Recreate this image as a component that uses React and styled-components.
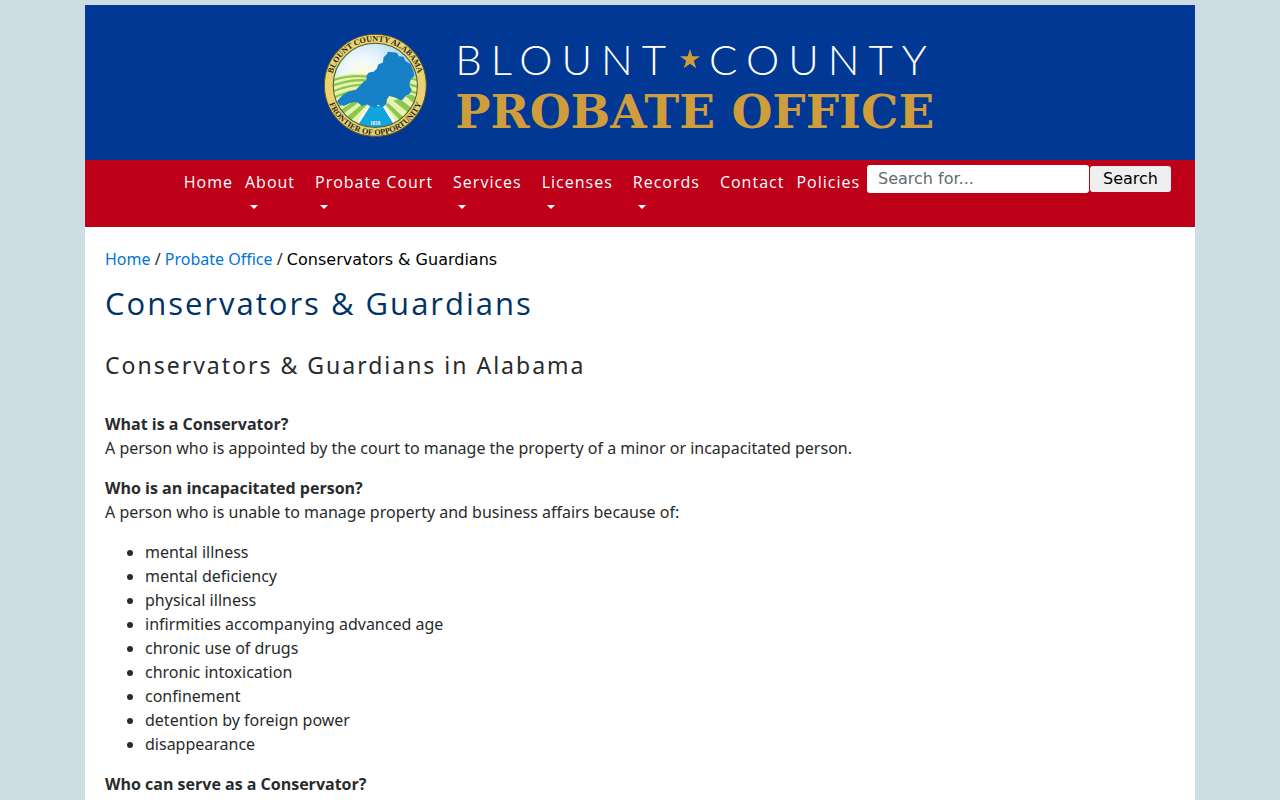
import React from 'react';
import styled, {createGlobalStyle} from 'styled-components';

const navLinks = [
    {label: 'Home'},
    {label: 'About', menu: true},
    {label: 'Probate Court', menu: true},
    {label: 'Services', menu: true},
    {label: 'Licenses', menu: true},
    {label: 'Records', menu: true},
    {label: 'Contact'},
    {label: 'Policies'}
];

const causes = [
    'mental illness',
    'mental deficiency',
    'physical illness',
    'infirmities accompanying advanced age',
    'chronic use of drugs',
    'chronic intoxication',
    'confinement',
    'detention by foreign power',
    'disappearance'
];

const Seal = () => (
    <SealIcon viewBox="0 0 303 303" role="img" aria-label="Blount County seal">
        <defs>
            <radialGradient id="sky" cx="0.38" cy="0.4" r="0.62">
                <stop offset="0" stopColor="#fffde0" />
                <stop offset="0.3" stopColor="#eef7fc" />
                <stop offset="0.75" stopColor="#a8d8f0" />
                <stop offset="1" stopColor="#4ba9dc" />
            </radialGradient>
            <clipPath id="inner"><circle cx="151" cy="151" r="124" /></clipPath>
            <path id="topArc" d="M21 151 A130 130 0 0 1 281 151" />
            <path id="bottomArc" d="M5 151 A146 146 0 0 0 297 151" />
        </defs>
        <circle cx="151" cy="151" r="150" fill="#e8d271" stroke="#5b5526" strokeWidth="3" />
        <g clipPath="url(#inner)">
            <rect width="303" height="303" fill="url(#sky)" />
            <path d="M20 130 Q80 108 140 122 L303 130 V303 H0 Z" fill="#e9f3b0" />
            <g fill="none" stroke="#8cc751" strokeWidth="7">
                <path d="M20 138 Q80 116 140 128" />
                <path d="M20 154 Q80 130 140 138" />
                <path d="M20 172 Q80 144 140 150" />
                <path d="M20 192 Q80 160 140 164" />
                <path d="M240 130 Q265 130 290 140" />
                <path d="M240 148 Q265 150 290 160" />
                <path d="M240 166 Q265 170 290 180" />
            </g>
            <g fill="#8cc751">
                <path d="M48 208 L66 198 L30 226 V216 Z" />
                <path d="M84 200 L104 200 L38 248 L30 236 Z" />
                <path d="M116 203 L130 205 L64 270 L50 258 Z" />
                <path d="M140 212 L146 216 L94 284 L78 278 Z" />
                <path d="M180 208 L190 204 L250 260 L238 270 Z" />
                <path d="M204 196 L222 190 L274 230 L264 244 Z" />
                <path d="M238 182 L258 178 L285 198 L280 216 Z" />
            </g>
            <path d="M128 212 H180 L230 290 H78 Z" fill="#fff" />
            <path d="M136 212 H172 L220 290 H86 Z" fill="#12a4dd" />
        </g>
        <path
            d="M42 198 L58 181 L72 173 L94 168 L104 158 L118 143 L128 137 L128 124 L133 116 L148 113 L158 104 L162 92 L176 86 L178 70 L187 62 L190 55 L213 58 L218 68 L232 70 L238 82 L252 90 L260 108 L262 122 L253 132 L247 152 L255 164 L249 175 L240 178 L228 192 L210 184 L190 179 L182 192 L181 204 L172 212 L158 204 L150 214 L138 210 L128 204 L112 208 L98 196 L76 200 L58 208 L48 206 Z"
            fill="#1681c7"
            stroke="#1681c7"
            strokeWidth="6"
            strokeLinejoin="round"
        />
        <circle cx="151" cy="151" r="124" fill="none" stroke="#4f5a2b" strokeWidth="3" />
        <SealText fontSize="24">
            <textPath href="#topArc" startOffset="50%">BLOUNT COUNTY ALABAMA</textPath>
        </SealText>
        <SealText fontSize="24">
            <textPath href="#bottomArc" startOffset="50%">FRONTIER OF OPPORTUNITY</textPath>
        </SealText>
        <SealYear x="151" y="267" fontSize="15">1818</SealYear>
    </SealIcon>
);

const Star = () => (
    <StarIcon viewBox="0 0 20 20" aria-hidden="true">
        <path d="M10 0 L12.3 7.2 H20 L13.8 11.8 L16.2 19.2 L10 14.7 L3.8 19.2 L6.2 11.8 L0 7.2 H7.7 Z" fill="#d09d3c" />
    </StarIcon>
);

const App = () => {
    const [query, setQuery] = React.useState('');
    return (
        <>
            <GlobalStyle />
            <Page>
                <Header>
                    <Seal />
                    <Wordmark>
                        <County><span>BLOUNT</span><Star /><span>COUNTY</span></County>
                        <Office>PROBATE OFFICE</Office>
                    </Wordmark>
                </Header>
                <NavBar>
                    <NavList>
                        {navLinks.map(({label, menu}) => (
                            <NavItem key={label} $menu={menu}>
                                <NavLink href="#">
                                    {label}
                                    {menu && <Caret />}
                                </NavLink>
                            </NavItem>
                        ))}
                    </NavList>
                    <SearchForm onSubmit={(event) => event.preventDefault()}>
                        <SearchInput
                            type="text"
                            aria-label="Search for"
                            placeholder="Search for..."
                            value={query}
                            onChange={(event) => setQuery(event.target.value)}
                        />
                        <SearchButton type="submit">Search</SearchButton>
                    </SearchForm>
                </NavBar>
                <Content>
                    <Breadcrumb aria-label="Breadcrumb">
                        <a href="#">Home</a> / <a href="#">Probate Office</a> / <span>Conservators &amp; Guardians</span>
                    </Breadcrumb>
                    <Title>Conservators &amp; Guardians</Title>
                    <Subtitle>Conservators &amp; Guardians in Alabama</Subtitle>
                    <p>
                        <strong>What is a Conservator?</strong><br />
                        A person who is appointed by the court to manage the property of a minor or incapacitated person.
                    </p>
                    <p>
                        <strong>Who is an incapacitated person?</strong><br />
                        A person who is unable to manage property and business affairs because of:
                    </p>
                    <ul>
                        {causes.map(cause => <li key={cause}>{cause}</li>)}
                    </ul>
                    <p><strong>Who can serve as a Conservator?</strong></p>
                </Content>
            </Page>
        </>
    );
};

const GlobalStyle = createGlobalStyle`
    *, *::before, *::after {
        box-sizing: border-box;
    }
    body {
        margin: 0;
        background-color: #cddde4;
        color: #292b2c;
        font-family: "Noto Sans", sans-serif;
        font-size: 16px;
        line-height: 24px;
    }
    html {
        overflow-x: hidden;
        scrollbar-width: none;
    }
    strong {
        font-family: "Open Sans", sans-serif;
    }
`;

const Page = styled.div`
    max-width: 1110px;
    margin: 5px auto 0;
    background-color: white;
`;

const Header = styled.header`
    display: flex;
    justify-content: center;
    align-items: center;
    gap: 28px;
    padding: 26px 20px 20px 0;
    background-color: #003894;
`;

const SealIcon = styled.svg`
    width: 103px;
    height: 103px;
`;

const SealText = styled.text`
    fill: #29291c;
    font-family: "Liberation Serif", serif;
    font-weight: bold;
    text-anchor: middle;
`;

const SealYear = styled(SealText)`
    fill: white;
`;

const Wordmark = styled.div`
    padding-top: 3px;
    white-space: nowrap;
`;

const County = styled.div`
    display: flex;
    align-items: center;
    color: white;
    font-family: Lato, sans-serif;
    font-size: 42px;
    font-weight: 300;
    line-height: 50px;
    letter-spacing: 9px;
`;

const StarIcon = styled.svg`
    width: 20px;
    height: 20px;
    margin: 0 9px 0 5px;
`;

const Office = styled.div`
    color: #d09d3c;
    font-family: "DejaVu Serif", serif;
    font-size: 47px;
    font-weight: bold;
    line-height: 56px;
`;

const NavBar = styled.nav`
    display: flex;
    justify-content: flex-end;
    align-items: flex-start;
    gap: 7px;
    padding: 5px 24px 9px 20px;
    background-color: #be0018;
`;

const NavList = styled.ul`
    display: flex;
    margin: 0;
    padding: 5px 0 0;
    list-style: none;
`;

const NavItem = styled.li`
    margin-right: ${({$menu}) => $menu ? '20px' : '12px'};
    &:last-child {
        margin-right: 0;
    }
`;

const NavLink = styled.a`
    display: block;
    min-height: 48px;
    color: white;
    font-family: "Open Sans", sans-serif;
    letter-spacing: 1px;
    text-decoration: none;
    white-space: nowrap;
`;

const Caret = styled.span`
    display: block;
    width: 0;
    margin: 11px 0 0 5px;
    border-top: 4px solid white;
    border-right: 4px solid transparent;
    border-left: 4px solid transparent;
`;

const SearchForm = styled.form`
    display: flex;
    align-items: center;
    gap: 1px;
`;

const SearchInput = styled.input`
    width: 222px;
    height: 28px;
    padding: 0 11px 2px;
    border: none;
    border-radius: 3px;
    background-color: white;
    font-family: "DejaVu Sans", sans-serif;
    font-size: 16px;
    &::placeholder {
        color: #636c72;
        opacity: 1;
    }
`;

const SearchButton = styled.button`
    height: 26px;
    padding: 0 13px 2px;
    border: none;
    border-radius: 3px;
    background-color: #efefef;
    color: black;
    font-family: "DejaVu Sans", sans-serif;
    font-size: 16px;
`;

const Content = styled.main`
    padding: 20px;
    p, ul {
        margin: 0 0 16px;
    }
    ul {
        padding-left: 40px;
    }
`;

const Breadcrumb = styled.nav`
    a {
        color: #0275d8;
        text-decoration: none;
    }
    span {
        color: black;
        font-family: "DejaVu Sans", sans-serif;
    }
`;

const Title = styled.h1`
    margin: 12px 0 28px;
    color: #003366;
    font-family: "Open Sans", sans-serif;
    font-size: 31px;
    font-weight: 400;
    line-height: 38px;
    letter-spacing: 2px;
`;

const Subtitle = styled.h2`
    margin: 0 0 32px;
    font-family: "Noto Sans", sans-serif;
    font-size: 23px;
    font-weight: 400;
    line-height: 30px;
    letter-spacing: 2px;
`;

export default App;
